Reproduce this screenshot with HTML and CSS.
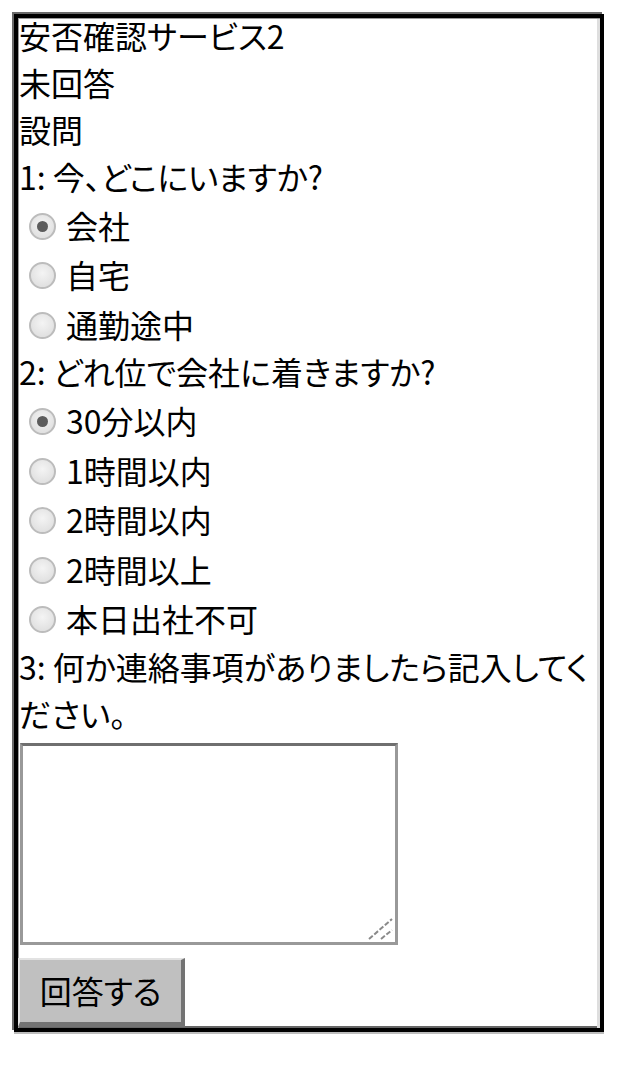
FILE: index.html
```html
<!DOCTYPE html>
<html lang="ja">
<head>
<meta charset="utf-8">
<title>安否確認サービス2</title>
<link rel="stylesheet" href="styles.css">
</head>
<body>
<div class="page">
  <form class="frame">
    <div class="line first">安否確認サービス2</div>
    <div class="line">未回答</div>
    <div class="line">設問</div>
    <div class="line">1: 今、どこにいますか?</div>
    <label class="opt"><input type="radio" name="q1" checked><span>会社</span></label>
    <label class="opt"><input type="radio" name="q1"><span>自宅</span></label>
    <label class="opt"><input type="radio" name="q1"><span>通勤途中</span></label>
    <div class="line">2: どれ位で会社に着きますか?</div>
    <label class="opt"><input type="radio" name="q2" checked><span>30分以内</span></label>
    <label class="opt"><input type="radio" name="q2"><span>1時間以内</span></label>
    <label class="opt"><input type="radio" name="q2"><span>2時間以内</span></label>
    <label class="opt"><input type="radio" name="q2"><span>2時間以上</span></label>
    <label class="opt"><input type="radio" name="q2"><span>本日出社不可</span></label>
    <div class="line">3: 何か連絡事項がありましたら記入してください。</div>
    <div class="memo-wrap">
      <textarea class="memo"></textarea>
      <svg class="grip" width="26" height="24" viewBox="0 0 26 24" aria-hidden="true">
        <line x1="1" y1="22" x2="24" y2="2" stroke="#8a8a8a" stroke-width="2" stroke-dasharray="5 2"/>
        <line x1="13" y1="22" x2="24" y2="13" stroke="#8a8a8a" stroke-width="2" stroke-dasharray="5 2"/>
      </svg>
    </div>
    <button type="button" class="submit">回答する</button>
  </form>
</div>
</body>
</html>
```

FILE: styles.css
```css
html, body {
  margin: 0;
  padding: 0;
  background: #fff;
}

.page {
  padding: 14px 0 40px 14px;
}

.frame {
  display: block;
  width: 590px;
  box-sizing: border-box;
  border: 4px solid #000;
  box-shadow: -2px -2px 0 #6a6a6a, 0 2px 0 #bdbdbd,
              inset 1px 1px 0 #9a9a9a, inset -3px 0 0 #dedede, inset 0 -2px 0 #666;
  margin: 0;
  padding: 0 0 1px 0;
  font-family: "Noto Sans CJK JP", "Noto Sans", sans-serif;
  font-size: 32px;
  font-feature-settings: "palt";
  color: #000;
}

.line {
  line-height: 47px;
  padding-left: 1px;
}

.line.first {
  margin-top: -6.25px;
}

.opt {
  display: flex;
  align-items: center;
  height: 49.5px;
  padding-left: 11px;
  gap: 10px;
  line-height: 40px;
}

.opt input {
  appearance: none;
  -webkit-appearance: none;
  margin: 3.5px 0 0 0;
  width: 27px;
  height: 27px;
  border-radius: 50%;
  box-sizing: border-box;
  border: 2px solid #bcbcbc;
  background: radial-gradient(circle at 50% 40%, #f4f4f4 0%, #e2e2e2 70%, #d6d6d6 100%);
  position: relative;
  flex: none;
}

.opt input:checked::after {
  content: "";
  position: absolute;
  left: 50%;
  top: 50%;
  width: 11px;
  height: 11px;
  margin: -5.5px 0 0 -5.5px;
  border-radius: 50%;
  background: #5c5c5c;
}

.memo-wrap {
  position: relative;
  width: 378px;
  height: 202px;
  margin: 6.25px 0 0 2px;
}

.memo {
  display: block;
  width: 378px;
  height: 202px;
  box-sizing: border-box;
  margin: 0;
  border-style: solid;
  border-width: 3px;
  border-color: #6f6f6f #999 #999 #999;
  background: #fff;
  font: inherit;
  padding: 2px;
  resize: none;
}

.grip {
  position: absolute;
  right: 4px;
  bottom: 4px;
}

.submit {
  display: block;
  margin: 13px 0 0 0;
  width: 167px;
  height: 69px;
  box-sizing: border-box;
  background: #c0c0c0;
  border-style: solid;
  border-width: 2px 4px 5px 2px;
  border-color: #e2e2e2 #737373 #737373 #e2e2e2;
  font-family: "Noto Sans CJK JP", "Noto Sans", sans-serif;
  font-size: 32px;
  font-feature-settings: "palt";
  color: #000;
  padding: 0 0 3px 0;
  cursor: pointer;
}
```
